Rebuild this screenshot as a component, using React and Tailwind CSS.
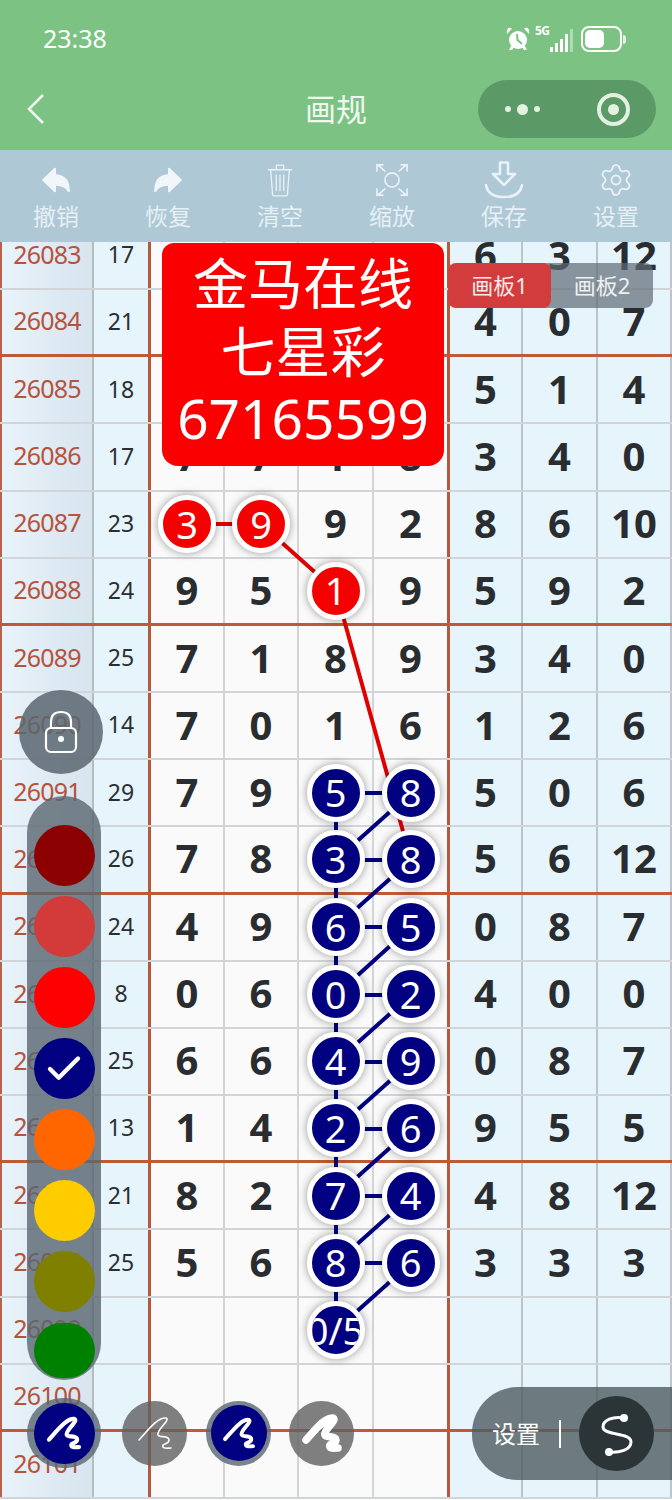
import { IoArrowUndo, IoArrowRedo } from "react-icons/io5";
import { Settings, Check } from "lucide-react";

const COLS = "grid grid-cols-[94px_57px_74px_74px_75px_76px_73px_75px_74px]";

// r = red marker, b = blue marker, everything else is a plain digit
const ROWS = [
  ["26083", "17", "", "", "", "", "6", "3", "12"],
  ["26084", "21", "", "", "", "", "4", "0", "7"],
  ["26085", "18", "", "", "", "", "5", "1", "4"],
  ["26086", "17", "7", "7", "1", "8", "3", "4", "0"],
  ["26087", "23", "r3", "r9", "9", "2", "8", "6", "10"],
  ["26088", "24", "9", "5", "r1", "9", "5", "9", "2"],
  ["26089", "25", "7", "1", "8", "9", "3", "4", "0"],
  ["26090", "14", "7", "0", "1", "6", "1", "2", "6"],
  ["26091", "29", "7", "9", "b5", "b8", "5", "0", "6"],
  ["26092", "26", "7", "8", "b3", "b8", "5", "6", "12"],
  ["26093", "24", "4", "9", "b6", "b5", "0", "8", "7"],
  ["26094", "8", "0", "6", "b0", "b2", "4", "0", "0"],
  ["26095", "25", "6", "6", "b4", "b9", "0", "8", "7"],
  ["26096", "13", "1", "4", "b2", "b6", "9", "5", "5"],
  ["26097", "21", "8", "2", "b7", "b4", "4", "8", "12"],
  ["26098", "25", "5", "6", "b8", "b6", "3", "3", "3"],
  ["26099", "", "", "", "b0/5", "", "", "", ""],
  ["26100", "", "", "", "", "", "", "", ""],
  ["26101", "", "", "", "", "", "", "", ""],
];

const BLUE_Y = [793, 860, 927, 995, 1062, 1129, 1196, 1263];

function Marker({ value }) {
  const red = value[0] === "r";
  return (
    <div
      className={`relative z-10 flex h-[58px] w-[58px] items-center justify-center overflow-hidden rounded-full border-[5px] border-white text-[38px] font-normal whitespace-nowrap text-white shadow-[0_0_8px_rgba(0,0,0,0.4)] ${
        red ? "bg-[#f50000]" : "bg-[#000080]"
      }`}
    >
      {value.slice(1)}
    </div>
  );
}

function Row({ row, index }) {
  const thick = index % 4 === 1;
  return (
    <div
      className={`${COLS} h-[67.17px] ${
        thick ? "border-b-[3px] border-[#c05a36]" : "border-b-2 border-[#d2d5d8]"
      }`}
    >
      <div className="flex items-center justify-center border-r-2 border-l-2 border-r-[#b4bcc2] border-l-[#b9614a] bg-gradient-to-r from-[#e8f3fb] to-[#d8e4ee] pb-[2px] text-[25px] tracking-[-0.8px] text-[#b5533c]">
        {row[0]}
      </div>
      <div className="flex items-center justify-center border-r-[3px] border-r-[#b8583a] bg-[#e6f4fc] pb-[2px] text-[23px] text-[#2a2f33]">
        {row[1]}
      </div>
      {row.slice(2).map((v, i) => (
        <div
          key={i}
          className={`flex items-center justify-center text-[40px] font-bold text-[#2a2d30] ${
            i === 3
              ? "border-r-[3px] border-r-[#b8583a] bg-[#fafafa]"
              : i < 3
                ? "border-r-2 border-r-[#d2d5d8] bg-[#fafafa]"
                : "border-r-2 border-r-[#bcc4c9] bg-[#e6f4fc]"
          }`}
        >
          {v[0] === "r" || v[0] === "b" ? <Marker value={v} /> : <span className="mb-[2px]">{v}</span>}
        </div>
      ))}
    </div>
  );
}

function Lines() {
  return (
    <svg className="absolute top-0 left-0" width="672" height="1278" viewBox="0 223 672 1278">
      <g stroke="#e00000" strokeWidth="4" fill="none">
        <path d="M187 524 L261 524 L336 591 L411 860" />
      </g>
      <g stroke="#000080" strokeWidth="4" fill="none">
        {BLUE_Y.map((y, i) => {
          const next = BLUE_Y[i + 1] || 1330;
          return (
            <path
              key={y}
              d={`M336 ${y} L411 ${y} L336 ${next} M336 ${y} L336 ${next}`}
            />
          );
        })}
      </g>
    </svg>
  );
}

function Scribble({ width, size = 64 }) {
  return (
    <svg width={size} height={size} viewBox="0 0 64 64" fill="none" stroke="white" strokeWidth={width} strokeLinecap="round" strokeLinejoin="round">
      <path d="M16 39 C25 29 35 16 43 17 C48 19 33 29 35 34 C36 37 46 34 46 39 C46 44 38 42 40 46 C41 48 46 47 48 47" />
    </svg>
  );
}

function StatusIcons() {
  return (
    <div className="flex items-center">
      <svg width="26" height="26" viewBox="0 0 26 26" fill="white">
        <circle cx="13" cy="14" r="9" />
        <path d="M2 8 L7 2.5 L4 1.5 Q1 3.5 2 8 Z M24 8 L19 2.5 L22 1.5 Q25 3.5 24 8 Z M6 20 L4 24 L7 24 L9 21 Z M20 20 L22 24 L19 24 L17 21 Z" />
        <path d="M12 8 L12.5 14 L17 18" stroke="#7cc283" strokeWidth="2" fill="none" />
      </svg>
      <div className="relative ml-[4px] h-[26px] w-[38px]">
        <span className="absolute top-[-3px] left-0 text-[12px] leading-[16px] font-bold tracking-[-0.5px] text-white">5G</span>
        <div className="absolute right-0 bottom-0 flex items-end gap-[2px]">
          <div className="h-[5px] w-[3px] bg-white" />
          <div className="h-[9px] w-[3px] bg-white" />
          <div className="h-[13px] w-[3px] bg-white" />
          <div className="h-[18px] w-[3px] bg-white" />
          <div className="h-[23px] w-[3px] bg-white/40" />
        </div>
      </div>
      <div className="ml-[8px] flex h-[26px] w-[41px] items-center rounded-[8px] border-2 border-white p-[2px]">
        <div className="h-full w-[19px] rounded-[5px] bg-white" />
      </div>
      <div className="ml-[1px] h-[9px] w-[3px] rounded-r bg-white/80" />
    </div>
  );
}

function Trash() {
  return (
    <svg width="28" height="34" viewBox="0 0 30 36" fill="none" stroke="#e8f2f7" strokeWidth="1.4">
      <path d="M2 7 H28 M11 7 V2 H19 V7 M5 7 L7 33 Q7 35 9 35 H21 Q23 35 23 33 L25 7 M11 12 V30 M15 12 V30 M19 12 V30" />
    </svg>
  );
}

function Scan() {
  return (
    <svg width="32" height="34" viewBox="0 0 34 36" fill="none" stroke="#e8f2f7" strokeWidth="1.8">
      <circle cx="17" cy="18" r="7.5" />
      <path d="M1 9 V2 H8 M2 2 L10 9 M26 2 H33 V9 M32 2 L24 9 M1 27 V34 H8 M2 34 L10 27 M33 27 V34 H26 M32 34 L24 27" />
    </svg>
  );
}

function Save() {
  return (
    <svg width="40" height="38" viewBox="0 0 40 38" fill="none" stroke="#e8f2f7" strokeWidth="2.6" strokeLinejoin="round" strokeLinecap="round">
      <path d="M16 1.5 H24 V13 H31 L20 24 L9 13 H16 Z" />
      <path d="M2 24 Q4 36 20 36 Q36 36 38 24" />
    </svg>
  );
}

const TOOLS = [
  { label: "撤销", icon: <IoArrowUndo size={34} color="#f0f6f9" /> },
  { label: "恢复", icon: <IoArrowRedo size={34} color="#f0f6f9" /> },
  { label: "清空", icon: <Trash /> },
  { label: "缩放", icon: <Scan /> },
  { label: "保存", icon: <Save /> },
  { label: "设置", icon: <Settings size={36} strokeWidth={1.2} color="#e8f2f7" /> },
];

const COLORS = ["bg-[#8b0000]", "bg-[#d33a3a]", "bg-[#ff0000]", "bg-[#000080]", "bg-[#ff6600]", "bg-[#ffcc00]", "bg-[#808000]"];

export default function App() {
  return (
    <div className="relative flex h-[1500px] w-[672px] flex-col overflow-hidden bg-white font-['Noto_Sans','Noto_Sans_CJK_SC',sans-serif]">
      {/* status bar + title bar */}
      <div className="h-[150px] shrink-0 bg-[#7cc283]">
        <div className="flex h-[80px] items-center justify-between pr-[46px] pb-[2px] pl-[43px]">
          <span className="text-[25px] text-white">23:38</span>
          <StatusIcons />
        </div>
        <div className="relative flex h-[58px] items-center justify-center">
          <svg className="absolute left-[26px]" width="20" height="32" viewBox="0 0 20 32" fill="none" stroke="#eef7ef" strokeWidth="2.6">
            <path d="M17 2 L3 16 L17 30" />
          </svg>
          <span className="text-[31px] text-[#f0f7f1]">画规</span>
          <div className="absolute right-[16px] flex h-[58px] w-[178px] items-center justify-between rounded-full bg-[#5b9966] pr-[26px] pl-[27px]">
            <div className="flex items-center gap-[6px]">
              <div className="h-[6px] w-[6px] rounded-full bg-[#e3f1e1]" />
              <div className="h-[11px] w-[11px] rounded-full bg-[#e3f1e1]" />
              <div className="h-[6px] w-[6px] rounded-full bg-[#e3f1e1]" />
            </div>
            <div className="flex h-[33px] w-[33px] items-center justify-center rounded-full border-[4px] border-[#e3f1e1]">
              <div className="h-[11px] w-[11px] rounded-full bg-[#e3f1e1]" />
            </div>
          </div>
        </div>
      </div>

      {/* toolbar */}
      <div className="grid h-[92px] shrink-0 grid-cols-6 bg-[#aec8d5] pt-[11px]">
        {TOOLS.map((t) => (
          <div key={t.label} className="flex flex-col items-center">
            <div className="flex h-[38px] items-center justify-center">{t.icon}</div>
            <span className="mt-[2px] text-[23px] leading-[30px] text-[#e6f0f5]">{t.label}</span>
          </div>
        ))}
      </div>

      {/* number table, first row is cut off by the toolbar */}
      <div className="relative min-h-0 flex-1 overflow-hidden">
        <div className="relative mt-[-19px]">
          {ROWS.map((row, i) => (
            <Row key={row[0]} row={row} index={i} />
          ))}
          <Lines />
        </div>
      </div>

      {/* banner */}
      <div className="absolute top-[243px] left-[162px] z-20 flex h-[223px] w-[282px] flex-col items-center rounded-t-[12px] rounded-b-[16px] bg-[#fa0000] pt-[6px] text-[55px] leading-[67.5px] text-white">
        <span>金马在线</span>
        <span>七星彩</span>
        <span>67165599</span>
      </div>

      {/* board tabs */}
      <div className="absolute top-[263px] left-[448px] z-20 flex">
        <div className="z-10 flex h-[45px] w-[103px] items-center justify-center rounded-[8px] bg-[#d33c3c] text-[22px] text-[#fbeaea]">画板1</div>
        <div className="ml-[-10px] flex h-[45px] w-[112px] items-center justify-center rounded-r-[8px] bg-[#5f6b75]/70 pl-[10px] text-[22px] text-[#eef1f3]">画板2</div>
      </div>

      {/* lock button */}
      <div className="absolute top-[690px] left-[19px] z-20 flex h-[84px] w-[84px] items-center justify-center rounded-full bg-[#5a6670]/85">
        <svg width="34" height="44" viewBox="0 0 34 44" fill="none" stroke="white" strokeWidth="2.2">
          <path d="M7 18 V12 Q7 2 17 2 Q27 2 27 12 V18" />
          <rect x="2" y="18" width="30" height="24" rx="5" />
          <circle cx="17" cy="29" r="3" fill="white" stroke="none" />
        </svg>
      </div>

      {/* colour palette */}
      <div className="absolute top-[796px] left-[27px] z-20 flex h-[584px] w-[74px] flex-col items-center gap-[10px] rounded-full bg-[#5a6670]/80 pt-[29px]">
        {COLORS.map((c, i) => (
          <div key={c} className={`flex h-[61px] w-[61px] shrink-0 items-center justify-center rounded-full ${c}`}>
            {i === 3 && <Check size={42} color="white" strokeWidth={2.5} />}
          </div>
        ))}
        <div className="mt-[1px] h-[55px] w-[61px] shrink-0 rounded-full bg-[#008000]" />
      </div>

      {/* pen widths */}
      <div className="absolute top-[1398px] left-[27px] z-20 flex items-center">
        <div className="flex h-[70px] w-[74px] items-center justify-center rounded-full bg-[#5a6670]/80">
          <div className="flex h-[61px] w-[61px] items-center justify-center rounded-full bg-[#000080]">
            <Scribble width={4.5} size={60} />
          </div>
        </div>
        <div className="ml-[21px] flex h-[65px] w-[65px] items-center justify-center rounded-full bg-[#606060]/80">
          <Scribble width={1.6} />
        </div>
        <div className="ml-[19px] flex h-[65px] w-[65px] items-center justify-center rounded-full bg-[#5a6670]/80">
          <div className="flex h-[56px] w-[56px] items-center justify-center rounded-full bg-[#000080]">
            <Scribble width={4.5} size={56} />
          </div>
        </div>
        <div className="ml-[18px] flex h-[65px] w-[65px] items-center justify-center rounded-full bg-[#606060]/80">
          <Scribble width={7.5} />
        </div>
      </div>

      {/* line settings */}
      <div className="absolute top-[1387px] right-0 z-20 flex h-[93px] w-[200px] items-center rounded-l-[46px] bg-[#4f5b60]/80 pl-[20px]">
        <span className="text-[24px] text-white">设置</span>
        <div className="ml-[19px] h-[28px] w-[2px] bg-white" />
        <div className="ml-[18px] flex h-[75px] w-[75px] items-center justify-center rounded-full bg-[#2b3436]">
          <svg width="40" height="48" viewBox="0 0 40 48" fill="none" stroke="white" strokeWidth="3" strokeLinecap="round">
            <path d="M27 8 C16 6 6 10 6 17 C6 26 34 22 34 32 C34 40 22 43 12 42" />
            <circle cx="27" cy="8" r="4" fill="white" stroke="none" />
            <circle cx="12" cy="42" r="4" fill="white" stroke="none" />
          </svg>
        </div>
      </div>
    </div>
  );
}
